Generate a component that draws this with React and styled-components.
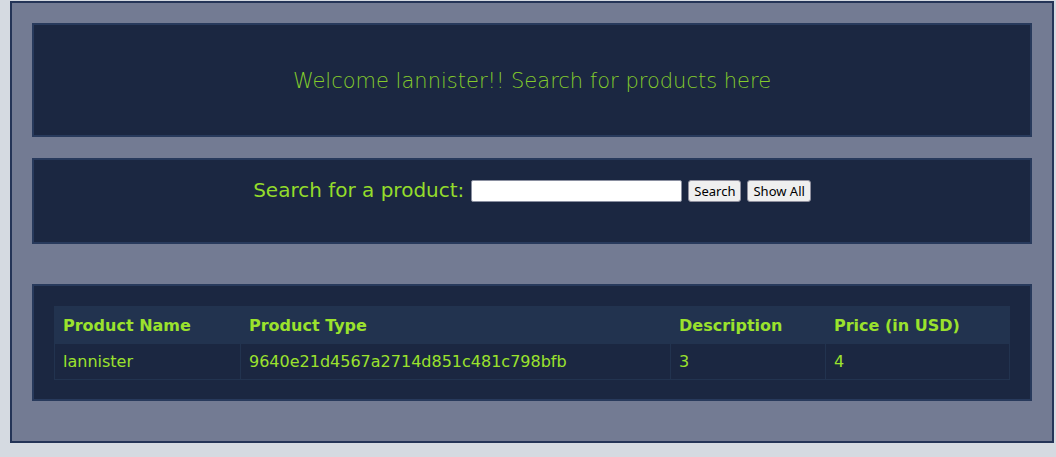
import React from "react";
import styled, { createGlobalStyle } from "styled-components";

const GlobalStyle = createGlobalStyle`
  html, body {
    margin: 0;
    padding: 0;
    background: #d5dae1;
    font-family: "DejaVu Sans", Verdana, sans-serif;
  }
`;

const rows = [
  {
    name: "lannister",
    type: "9640e21d4567a2714d851c481c798bfb",
    description: "3",
    price: "4",
  },
];

const App = () => {
  return (
    <>
      <GlobalStyle />
      <Page>
        {/* welcome banner */}
        <Panel $height={114}>
          <Welcome>Welcome lannister!! Search for products here</Welcome>
        </Panel>
        {/* search form */}
        <SearchPanel>
          <SearchForm onSubmit={(e) => e.preventDefault()}>
            <Label>Search for a product:</Label>
            <SearchInput type="text" />
            <Button type="submit">Search</Button>
            <Button type="button">Show All</Button>
          </SearchForm>
        </SearchPanel>
        {/* results */}
        <TablePanel>
          <Table>
            <colgroup>
              <col style={{ width: 186 }} />
              <col style={{ width: 430 }} />
              <col style={{ width: 155 }} />
              <col />
            </colgroup>
            <thead>
              <tr>
                <Th>Product Name</Th>
                <Th>Product Type</Th>
                <Th>Description</Th>
                <Th>Price (in USD)</Th>
              </tr>
            </thead>
            <tbody>
              {rows.map((r) => (
                <tr key={r.type}>
                  <Td>{r.name}</Td>
                  <Td>{r.type}</Td>
                  <Td>{r.description}</Td>
                  <Td>{r.price}</Td>
                </tr>
              ))}
            </tbody>
          </Table>
        </TablePanel>
      </Page>
    </>
  );
};

const Page = styled.div`
  box-sizing: border-box;
  width: 1044px;
  margin: 1px 0 0 10px;
  padding: 20px 20px 40px;
  background-color: #737b93;
  border: 2px solid #243457;
  display: flex;
  flex-direction: column;
`;

const Panel = styled.div`
  box-sizing: border-box;
  height: ${(p) => p.$height}px;
  background-color: #1b2741;
  border: 2px solid #283a5c;
  display: flex;
  align-items: center;
  justify-content: center;
  padding-top: 2px;
`;

const Welcome = styled.h2`
  margin: 0;
  font-family: "DejaVu Sans", sans-serif;
  font-weight: 200;
  font-size: 21px;
  color: #84cc2c;
`;

const SearchPanel = styled.div`
  box-sizing: border-box;
  height: 86px;
  margin-top: 21px;
  background-color: #1b2741;
  border: 2px solid #283a5c;
  display: flex;
  justify-content: center;
  padding-top: 20px;
`;

const SearchForm = styled.form`
  display: flex;
  align-items: center;
  height: 22px;
  gap: 6px;
`;

const Label = styled.span`
  font-family: "DejaVu Sans", sans-serif;
  font-size: 20px;
  line-height: 22px;
  color: #94dc2b;
  margin-right: 1px;
  margin-top: -3px;
`;

const SearchInput = styled.input`
  box-sizing: border-box;
  width: 211px;
  height: 22px;
  margin: 0;
  border: 1px solid #8a8fa0;
  border-radius: 2px;
  background: #fff;
`;

const Button = styled.button`
  box-sizing: border-box;
  height: 22px;
  padding: 0 5px;
  margin: 0;
  font-family: "Noto Sans", "Open Sans", sans-serif;
  font-size: 13px;
  color: #000;
  background: #efefef;
  border: 1px solid #8f8f9d;
  border-radius: 3px;
`;

const TablePanel = styled.div`
  box-sizing: border-box;
  margin-top: 40px;
  background-color: #1b2741;
  border: 2px solid #283a5c;
  padding: 20px 20px 19px;
`;

const Table = styled.table`
  width: 100%;
  border-collapse: collapse;
  table-layout: fixed;
  font-family: "DejaVu Sans", sans-serif;
  font-size: 16px;
  color: #9be22d;
`;

const Th = styled.th`
  text-align: left;
  font-weight: bold;
  height: 36px;
  padding: 0 8px;
  background-color: #22334f;
  border: 1px solid #22334f;
`;

const Td = styled.td`
  height: 35px;
  padding: 0 8px;
  border: 1px solid #22334f;
`;

export default App;
